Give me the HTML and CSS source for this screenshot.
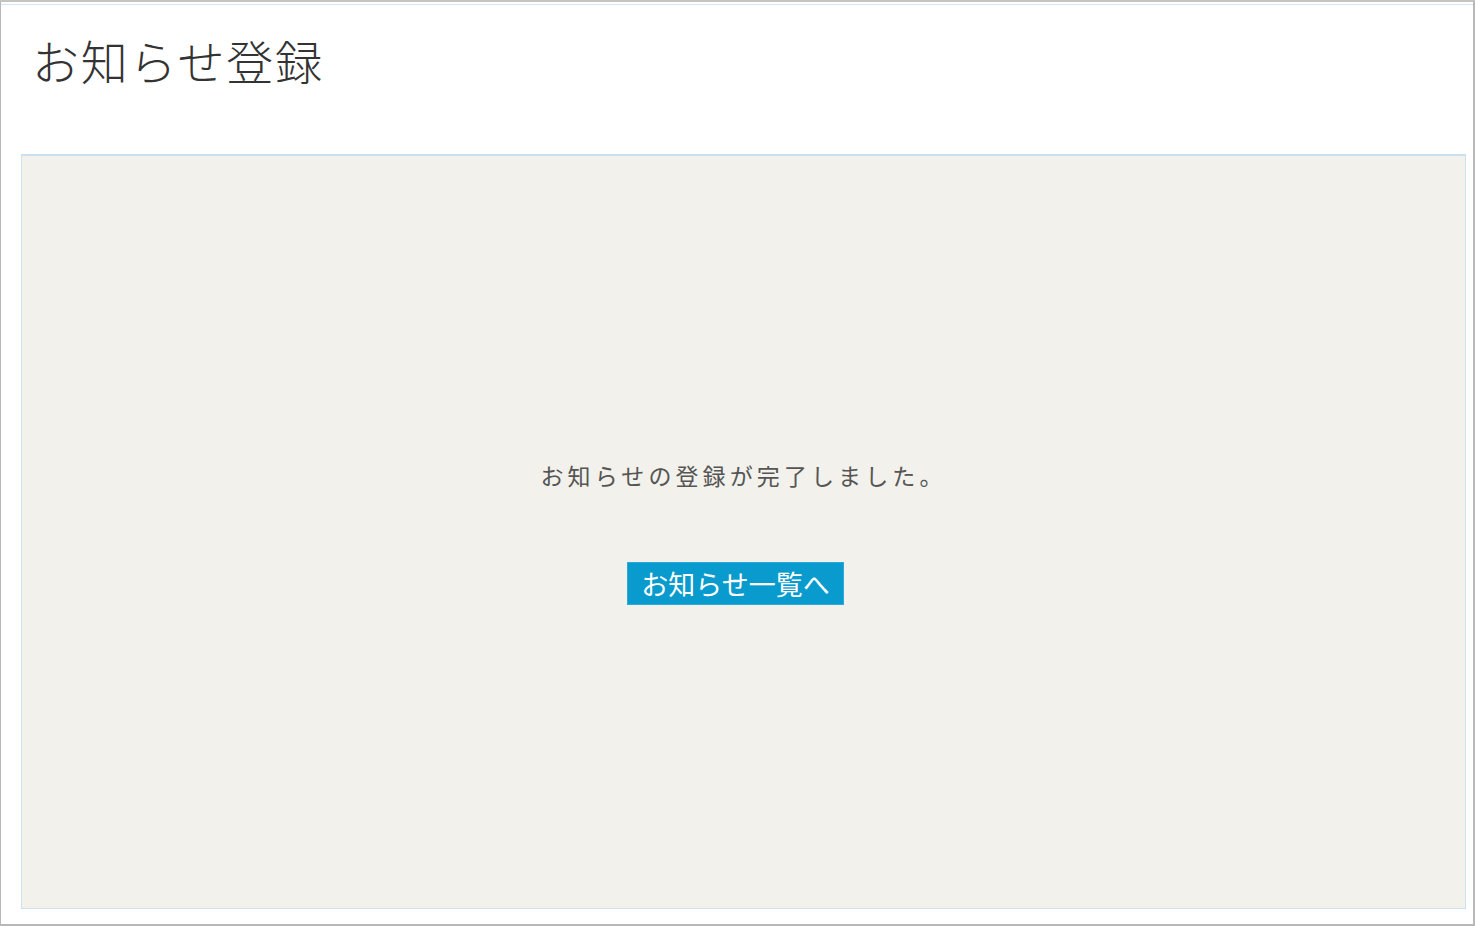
FILE: index.html
```html
<!DOCTYPE html>
<html>
<head>
  <meta charset="utf-8">
  <link rel="stylesheet" href="styles.css">
</head>
<body>
  <div class="page">
    <h1 class="page-title">お知らせ登録</h1>
    <div class="done-panel">
      <p class="done-message">お知らせの登録が完了しました。</p>
      <a class="btn-list" href="#">お知らせ一覧へ</a>
    </div>
  </div>
</body>
</html>
```

FILE: styles.css
```css
/* notice registration - complete */
html, body {
  margin: 0;
  padding: 0;
  background-color: #fff;
}

body {
  font-family: "Noto Sans CJK JP", "Noto Sans", sans-serif;
  color: #333;
}

.page {
  box-sizing: border-box;
  width: 1475px;
  height: 926px;
  border-top: 2px solid #c4c4c4;
  border-left: 1px solid #b8b8b8;
  border-right: 2px solid #b8b8b8;
  border-bottom: 2px solid #b8b8b8;
  padding: 0 7px 15px 20px;
  display: flex;
  flex-direction: column;
  box-shadow: inset 0 2px 0 #fff, inset 0 3px 0 #d4e6f5;
}

.page-title {
  flex: none;
  margin: 0;
  padding: 25px 0 0 11px;
  height: 152px;
  box-sizing: border-box;
  font-size: 47px;
  font-weight: 300;
  line-height: 66px;
  color: #333;
  letter-spacing: 1.8px;
}

.done-panel {
  flex: 1;
  background-color: #f2f1eb;
  border: 1px solid #cde0ee;
  border-top: 2px solid #cde0ee;
  display: flex;
  flex-direction: column;
  align-items: center;
  justify-content: center;
}

.done-message {
  margin: 0 0 71px 0;
  font-size: 23px;
  letter-spacing: 4.1px;
  color: #555;
  font-weight: 400;
  line-height: 32px;
}

.btn-list {
  display: inline-block;
  box-sizing: border-box;
  width: 217px;
  height: 43px;
  line-height: 41px;
  text-align: center;
  background-color: #099ace;
  border: 1px solid #2ca9d8;
  color: #fff;
  font-size: 27px;
  text-decoration: none;
  margin-left: -16px;
}
```
